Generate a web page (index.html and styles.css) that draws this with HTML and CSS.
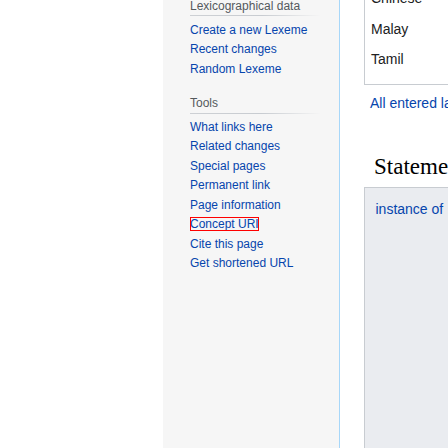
FILE: index.html
```html
<!DOCTYPE html>
<html lang="en">
<head>
<meta charset="utf-8">
<title>Lexeme</title>
<link rel="stylesheet" href="styles.css">
</head>
<body>
<div class="page">
  <div class="gutter"></div>
  <nav class="sidebar">
    <div class="portal">
      <h3 class="portal-heading">Lexicographical data</h3>
      <ul class="portal-list">
        <li><a href="#">Create a new Lexeme</a></li>
        <li><a href="#">Recent changes</a></li>
        <li><a href="#">Random Lexeme</a></li>
      </ul>
    </div>
    <div class="portal portal-tools">
      <h3 class="portal-heading">Tools</h3>
      <ul class="portal-list">
        <li><a href="#">What links here</a></li>
        <li><a href="#">Related changes</a></li>
        <li><a href="#">Special pages</a></li>
        <li><a href="#">Permanent link</a></li>
        <li><a href="#">Page information</a></li>
        <li><a href="#" class="highlight">Concept URI</a></li>
        <li><a href="#">Cite this page</a></li>
        <li><a href="#">Get shortened URL</a></li>
      </ul>
    </div>
  </nav>
  <main class="content">
    <div class="lang-box">
      <div class="lang-row">Chinese</div>
      <div class="lang-row">Malay</div>
      <div class="lang-row">Tamil</div>
    </div>
    <p class="all-langs"><a href="#">All entered languages</a></p>
    <h2 class="section-title">Statements</h2>
    <div class="statement-box">
      <a href="#" class="prop">instance of</a>
    </div>
  </main>
</div>
</body>
</html>
```

FILE: styles.css
```css
html, body {
  margin: 0;
  padding: 0;
  height: 100%;
  overflow: hidden;
  background: #ffffff;
}

body {
  font-family: "Liberation Sans", Arial, sans-serif;
}

a {
  color: #0645ad;
  text-decoration: none;
}

.page {
  display: flex;
  height: 100%;
}

.gutter {
  width: 163px;
  flex: none;
}

.sidebar {
  width: 149px;
  flex: none;
  background: #f6f6f6;
  border-right: 1px solid #a7d7f9;
  padding: 0 0 0 27px;
}

.portal {
  margin-top: -1.2px;
  width: 131px;
}

.portal-tools {
  margin-top: 16.8px;
}

.portal-heading {
  margin: 0;
  font-size: 12px;
  font-weight: normal;
  line-height: 14px;
  color: #54595d;
  padding-bottom: 3.5px;
  background-image: linear-gradient(to right, #cdd0d4 0, #c8ccd1 55%, rgba(200, 204, 209, 0) 100%);
  background-size: 100% 1px;
  background-position: left bottom;
  background-repeat: no-repeat;
}

.portal-list {
  list-style: none;
  margin: 0;
  padding: 4.45px 0 0 0;
}

.portal-list li {
  font-size: 12px;
  line-height: 13.5px;
  padding: 3px 0;
  white-space: nowrap;
}

.highlight {
  outline: 1px solid #ff0000;
  outline-offset: -1px;
}

.content {
  flex: 1;
  min-width: 0;
  overflow: hidden;
  padding-left: 24px;
  color: #202122;
}

.lang-box {
  width: 400px;
  margin-top: -17px;
  border: 1px solid #c8ccd1;
  border-top: 0;
  padding: 0 0 9.6px 6px;
}

.lang-row {
  font-size: 14px;
  line-height: 18.5px;
  padding: 6px 0;
  white-space: nowrap;
}

.all-langs {
  margin: 6.45px 0 0 6px;
  font-size: 14px;
  line-height: 22px;
  white-space: nowrap;
}

.section-title {
  margin: 39.75px 0 0 10px;
  font-family: "Liberation Serif", "Times New Roman", serif;
  font-weight: normal;
  font-size: 23px;
  line-height: 28px;
  white-space: nowrap;
  color: #000000;
}

.statement-box {
  width: 400px;
  height: 400px;
  margin-top: 5.8px;
  background: #eaecf0;
  border: 1px solid #c8ccd1;
  padding: 11.15px 0 0 10.5px;
  font-size: 14px;
  line-height: 20px;
  white-space: nowrap;
}
```
